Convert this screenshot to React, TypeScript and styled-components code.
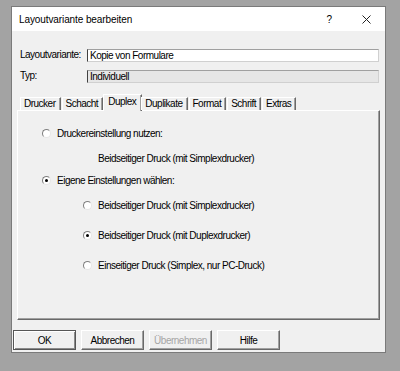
import React from "react";
import styled, { createGlobalStyle } from "styled-components";

const Global = createGlobalStyle`
  html, body { margin: 0; padding: 0; background: #a3a3a3; }
  body {
    width: 400px; height: 371px; overflow: hidden;
    font-family: "Liberation Sans", Arial, sans-serif;
    font-size: 10px; letter-spacing: -0.5px; color: #000;
  }
`;

const Dialog = styled.div`
  margin: 6px 0 0 11px;
  width: 375px;
  height: 347px;
  box-sizing: border-box;
  border: 1px solid #7a7a7a;
  background: #f0f0f0;
  display: flex;
  flex-direction: column;
`;

const TitleBar = styled.div`
  height: 24px;
  flex: none;
  background: #fff;
  display: flex;
  align-items: center;
  padding-left: 7px;
  letter-spacing: -0.1px;
`;

const Title = styled.div`
  flex: 1;
  font-size: 10px;
`;

const HelpGlyph = styled.span`
  font-size: 10px;
  margin-right: 30px;
  letter-spacing: 0;
`;

const CloseIcon = styled.svg`
  width: 9px;
  height: 9px;
  margin-right: 14px;
`;

const Form = styled.div`
  margin: 18px 6px 0 8px;
  display: grid;
  grid-template-columns: 67px 1fr;
  row-gap: 8px;
`;

const Label = styled.div`
  line-height: 11px;
`;

const Field = styled.div<{ $readOnly?: boolean }>`
  height: 13px;
  box-sizing: border-box;
  border: 1px solid;
  border-color: #a0a0a0 #d0d0d0 #d0d0d0 #404040;
  background: ${(p) => (p.$readOnly ? "#e6e6e6" : "#fff")};
  padding-left: 2px;
  line-height: 11px;
  white-space: nowrap;
`;

const TabArea = styled.div`
  margin: 11px 5px 0 5px;
  display: flex;
  flex-direction: column;
`;

const TabStrip = styled.div`
  display: flex;
  align-items: flex-end;
  height: 16px;
  padding-left: 3px;
  position: relative;
  z-index: 1;
`;

const Tab = styled.div<{ $active?: boolean }>`
  box-sizing: border-box;
  height: ${(p) => (p.$active ? "17px" : "13px")};
  margin: ${(p) => (p.$active ? "0 -1px -1px -1px" : "0 1px 0 0")};
  padding: ${(p) => (p.$active ? "1px 5px 0 4px" : "0 4px 0 3px")};
  border-left: 1px solid #fff;
  border-top: 1px solid #fff;
  border-right: 1px solid #696969;
  box-shadow: inset -1px 0 0 #a0a0a0;
  background: #f0f0f0;
  line-height: 11px;
  white-space: nowrap;
`;

const Panel = styled.div`
  height: 210px;
  box-sizing: border-box;
  border: 1px solid;
  border-color: #fff #696969 #696969 #fff;
  box-shadow: inset -1px -1px 0 #a0a0a0;
  display: flex;
  flex-direction: column;
`;

const Option = styled.div<{ $top: number; $indent: number }>`
  display: flex;
  align-items: center;
  height: 12px;
  margin-top: ${(p) => p.$top}px;
  margin-left: ${(p) => p.$indent}px;
  white-space: nowrap;
`;

const Radio = styled.span<{ $checked?: boolean }>`
  position: relative;
  width: 9px;
  height: 9px;
  box-sizing: border-box;
  border-radius: 50%;
  border: 1px solid;
  border-color: #7f7f7f #e6e6e6 #e6e6e6 #7f7f7f;
  background: #fff;
  margin-right: 6px;
  flex: none;
  &::after {
    content: "";
    display: ${(p) => (p.$checked ? "block" : "none")};
    position: absolute;
    left: 2px;
    top: 2px;
    width: 3px;
    height: 3px;
    border-radius: 50%;
    background: #000;
  }
`;

const ButtonRow = styled.div`
  display: flex;
  gap: 5px;
  margin: 10px 0 0 1px;
`;

const Button = styled.div<{ $default?: boolean; $disabled?: boolean }>`
  width: 63px;
  height: 20px;
  box-sizing: border-box;
  display: flex;
  align-items: center;
  justify-content: center;
  background: #f0f0f0;
  color: ${(p) => (p.$disabled ? "#a6a6a6" : "#000")};
  border: 1px solid;
  border-color: ${(p) =>
    p.$default ? "#555 #555 #555 #555" : "#fff #696969 #696969 #fff"};
  box-shadow: ${(p) =>
    p.$default
      ? "inset 1px 1px 0 #fff, inset -1px -1px 0 #8a8a8a"
      : "inset -1px -1px 0 #a0a0a0"};
`;

const tabs = ["Drucker", "Schacht", "Duplex", "Duplikate", "Format", "Schrift", "Extras"];

export default function App() {
  return (
    <>
      <Global />
      <Dialog>
        <TitleBar>
          <Title>Layoutvariante bearbeiten</Title>
          <HelpGlyph>?</HelpGlyph>
          <CloseIcon viewBox="0 0 9 9">
            <path d="M0.5 0.5 L8.5 8.5 M8.5 0.5 L0.5 8.5" stroke="#222" strokeWidth="1" />
          </CloseIcon>
        </TitleBar>
        <Form>
          <Label>Layoutvariante:</Label>
          <Field>Kopie von Formulare</Field>
          <Label>Typ:</Label>
          <Field $readOnly>Individuell</Field>
        </Form>
        <TabArea>
          <TabStrip>
            {tabs.map((t) => (
              <Tab key={t} $active={t === "Duplex"}>
                {t}
              </Tab>
            ))}
          </TabStrip>
          <Panel>
            <Option $top={16} $indent={24}>
              <Radio />
              Druckereinstellung nutzen:
            </Option>
            <Option $top={13} $indent={80}>
              Beidseitiger Druck (mit Simplexdrucker)
            </Option>
            <Option $top={10} $indent={24}>
              <Radio $checked />
              Eigene Einstellungen wählen:
            </Option>
            <Option $top={13} $indent={65}>
              <Radio />
              Beidseitiger Druck (mit Simplexdrucker)
            </Option>
            <Option $top={18} $indent={65}>
              <Radio $checked />
              Beidseitiger Druck (mit Duplexdrucker)
            </Option>
            <Option $top={18} $indent={65}>
              <Radio />
              Einseitiger Druck (Simplex, nur PC-Druck)
            </Option>
          </Panel>
        </TabArea>
        <ButtonRow>
          <Button $default>OK</Button>
          <Button>Abbrechen</Button>
          <Button $disabled>Übernehmen</Button>
          <Button>Hilfe</Button>
        </ButtonRow>
      </Dialog>
    </>
  );
}
